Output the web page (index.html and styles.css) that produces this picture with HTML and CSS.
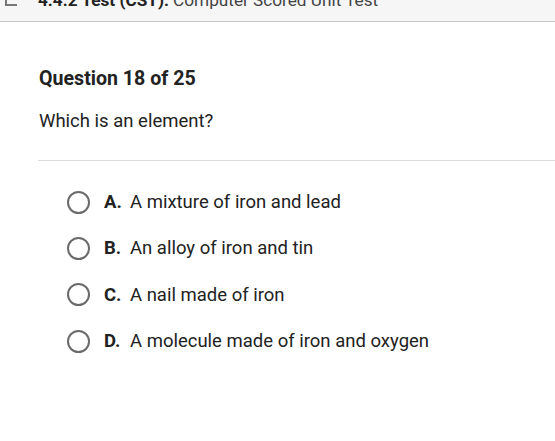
FILE: index.html
```html
<!DOCTYPE html>
<html>
<head>
<meta charset="utf-8">
<link rel="stylesheet" href="styles.css">
</head>
<body>
<header class="topbar">
  <span class="topicon"></span>
  <div class="toptitle"><b>4.4.2 Test (CST):</b> Computer Scored Unit Test</div>
</header>
<main class="question">
  <h1 class="qnum">Question 18 of 25</h1>
  <p class="prompt">Which is an element?</p>
  <hr class="divider">
  <ul class="options">
    <li class="option"><span class="radio"></span><span class="letter">A.</span><span class="text">A mixture of iron and lead</span></li>
    <li class="option"><span class="radio"></span><span class="letter">B.</span><span class="text">An alloy of iron and tin</span></li>
    <li class="option"><span class="radio"></span><span class="letter">C.</span><span class="text">A nail made of iron</span></li>
    <li class="option"><span class="radio"></span><span class="letter">D.</span><span class="text">A molecule made of iron and oxygen</span></li>
  </ul>
</main>
</body>
</html>
```
FILE: styles.css
```css
* { box-sizing: border-box; }
html, body { margin: 0; padding: 0; background: #fff; }
body { font-family: Roboto, "Liberation Sans", sans-serif; color: #222; width: 555px; height: 441px; overflow: hidden; }

.topbar {
  height: 22px;
  background: #f6f6f6;
  border-bottom: 1px solid #c8c8c8;
  display: flex;
  align-items: flex-end;
  overflow: hidden;
  position: relative;
}
.topicon {
  position: absolute;
  left: 5px;
  top: -6px;
  width: 12px;
  height: 12px;
  border-left: 2px solid #777;
  border-bottom: 2px solid #777;
}
.toptitle {
  margin-left: 38px;
  font-size: 17.2px;
  line-height: 22px;
  margin-bottom: 10px;
  color: #444;
  white-space: nowrap;
}
.toptitle b { color: #222; font-weight: 700; }

.question { padding: 0 0 0 39px; }
.qnum {
  margin: 45px 0 0;
  font-size: 19.6px;
  line-height: 24px;
  font-weight: 700;
  color: #222;
}
.prompt {
  margin: 18px 0 0;
  font-size: 18.5px;
  line-height: 24px;
  color: #222;
}
.divider {
  margin: 27px 0 0 -1px;
  border: 0;
  border-top: 1px solid #dcdcdc;
  height: 0;
}
.options {
  list-style: none;
  margin: 18px 0 0;
  padding: 0 0 0 28px;
}
.option {
  display: flex;
  align-items: center;
  height: 46.3px;
  font-size: 18.5px;
  color: #222;
}
.radio {
  width: 23px;
  height: 23px;
  border: 2px solid #6a6a6a;
  border-radius: 50%;
  flex: none;
}
.letter {
  font-weight: 700;
  margin-left: 14px;
  width: 26px;
}
.text { color: #222; }
```
